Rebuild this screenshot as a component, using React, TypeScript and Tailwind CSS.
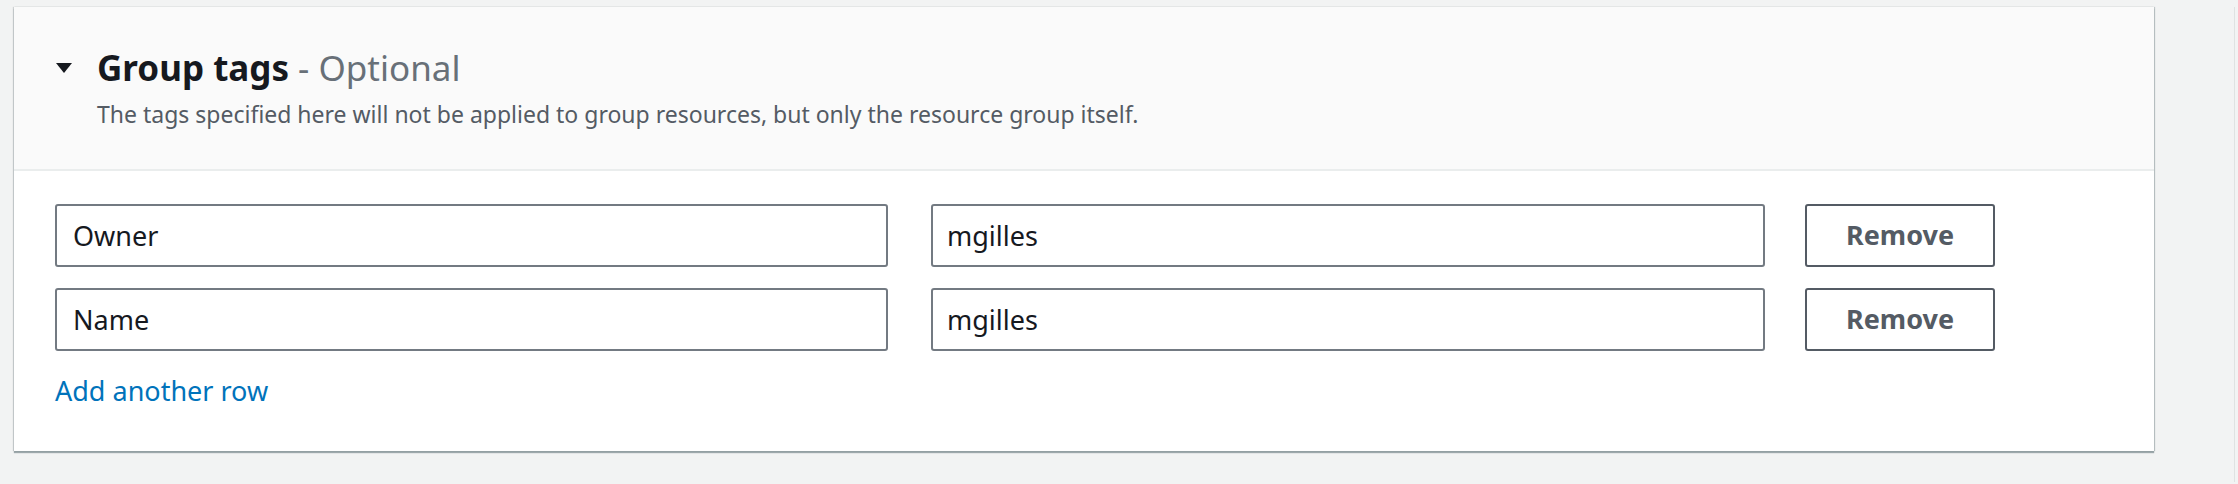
const rows = [
  { key: "Owner", value: "mgilles" },
  { key: "Name", value: "mgilles" },
];

const font = { fontFamily: '"Noto Sans", "Open Sans", Arial, sans-serif' };

function TagRow({ k, v }: { k: string; v: string }) {
  return (
    <div className="flex items-center">
      <input
        readOnly
        value={k}
        className="w-[833px] h-[63px] rounded-[3px] border-2 border-[#737a82] bg-white pl-[16px] text-[27px] text-[#16191f] outline-none"
      />
      <input
        readOnly
        value={v}
        className="ml-[43px] w-[834px] h-[63px] rounded-[3px] border-2 border-[#737a82] bg-white pl-[14px] text-[27px] text-[#16191f] outline-none"
      />
      <button className="ml-[40px] w-[190px] h-[63px] rounded-[3px] border-2 border-[#545b64] bg-white text-[27px] font-bold text-[#545b64]">
        Remove
      </button>
    </div>
  );
}

export default function App() {
  return (
    <div className="min-h-[484px] w-[2238px] bg-[#f2f3f3] pt-[7px]" style={font}>
      <div className="w-[2235px] border-r border-[#dfe2e2] pb-[31px]">
        <div className="ml-[14px] w-[2140px] bg-white shadow-[0_2px_1px_0_rgba(0,28,36,0.35),1px_0_1px_0_rgba(0,28,36,0.2),-1px_0_1px_0_rgba(0,28,36,0.15)]">
          {/* header */}
          <div className="border-b-2 border-[#eaeded] bg-[#fafafa] pl-[42px] pt-[41px] pb-[39px]">
            <div className="flex items-center">
              <svg width="16" height="10" viewBox="0 0 16 10" className="shrink-0">
                <polygon points="0,0 16,0 8,10" fill="#16191f" />
              </svg>
              <h2 className="ml-[25px] text-[35px] leading-[40px] text-[#16191f]">
                <span className="font-bold">Group tags</span>
                <span className="text-[#687078]"> - Optional</span>
              </h2>
            </div>
            <p className="ml-[41px] mt-[10px] text-[23px] leading-[32px] text-[#545b64]">
              The tags specified here will not be applied to group resources, but only the resource group itself.
            </p>
          </div>

          {/* tag rows */}
          <div className="pl-[41px] pt-[33px] pb-[44px]">
            <div className="flex flex-col gap-[21px]">
              {rows.map((r) => (
                <TagRow key={r.key} k={r.key} v={r.value} />
              ))}
            </div>
            <a href="#" className="mt-[24px] block w-fit text-[27px] leading-[32px] text-[#0073bb]">
              Add another row
            </a>
          </div>
        </div>
      </div>
    </div>
  );
}
